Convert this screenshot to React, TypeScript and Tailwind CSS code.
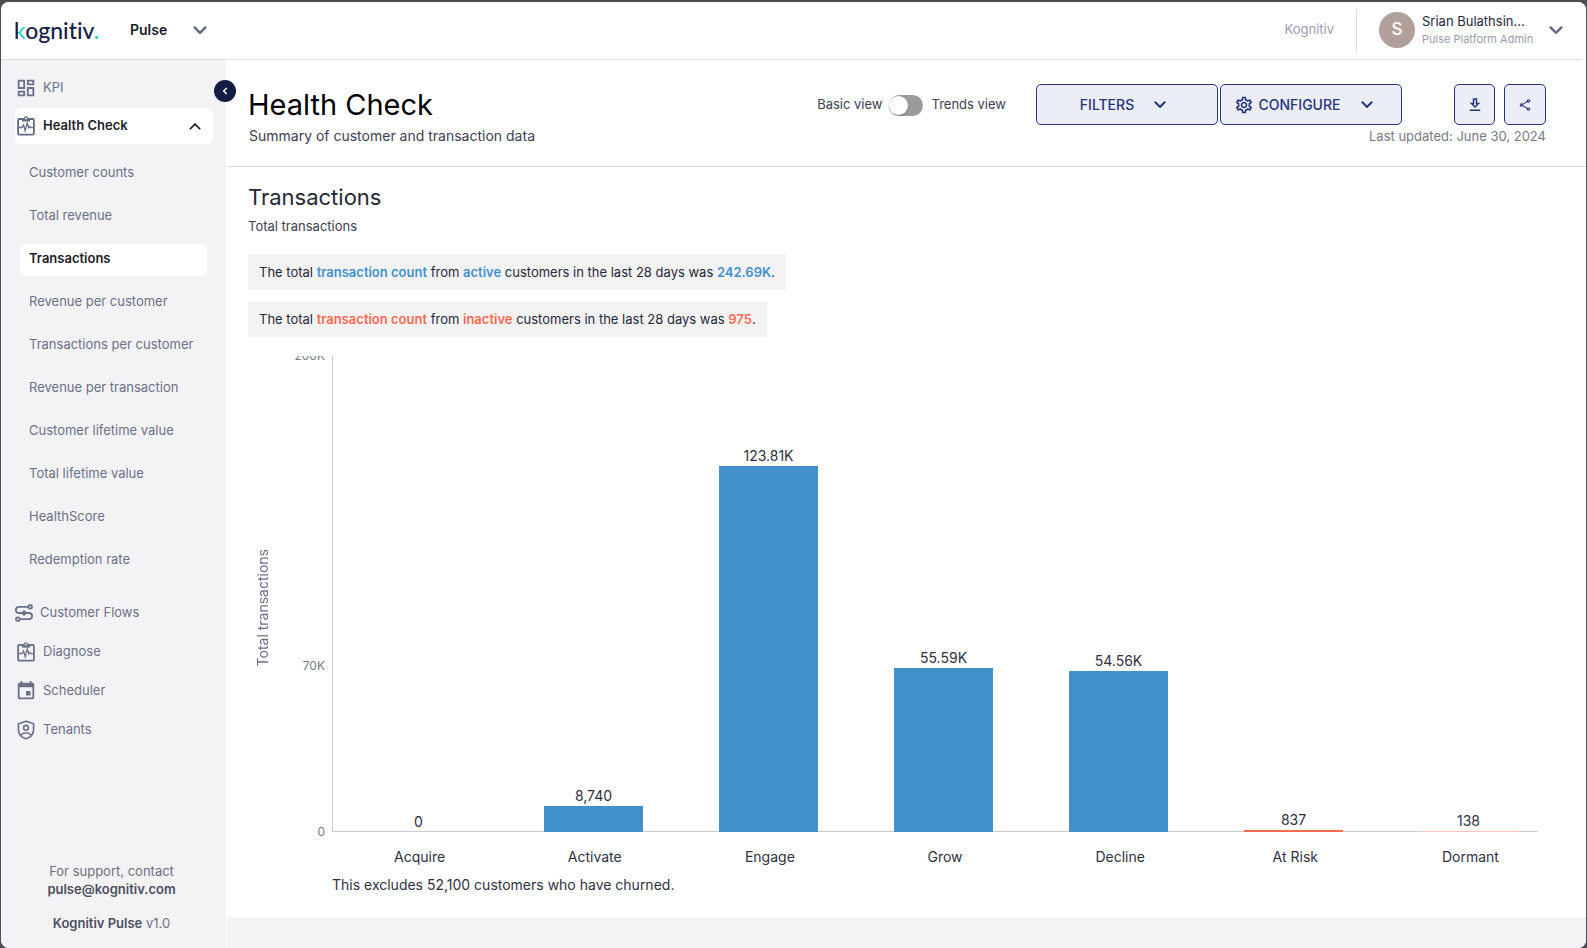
import type { ReactNode } from "react";
import { MdEvent, MdOutlineDashboard, MdOutlineSettings, MdOutlineShare } from "react-icons/md";

function Chevron({ className, up = false, weight = 2 }: { className: string; up?: boolean; weight?: number }) {
  return (
    <svg viewBox="0 0 14 8" fill="none" stroke="currentColor" strokeWidth={weight} className={className} aria-hidden="true">
      <path d={up ? "M1 7.2 7 1.2l6 6" : "M1 .8 7 6.8l6-6"} />
    </svg>
  );
}

function DownloadIcon() {
  return (
    <svg viewBox="0 0 24 24" fill="currentColor" className="size-[18px]" aria-hidden="true">
      <path d="M19 9h-4V3H9v6H5l7 7 7-7zm-8 2V5h2v6h1.17L12 13.17 9.83 11H11zm-6 7h14v2H5z" />
    </svg>
  );
}

function ClipboardPulse() {
  return (
    <svg viewBox="0 0 18 20" fill="none" stroke="currentColor" className="h-5 w-[18px]" aria-hidden="true">
      <rect x="1.1" y="3" width="15.8" height="15.6" rx="1.2" strokeWidth="1.8" />
      <path d="M5 2.600h8v3H5z" fill="currentColor" stroke="none" />
      <circle cx="9" cy="2.400" r="1.500" strokeWidth="1.200" fill="#f3f3f6" />
      <path d="M2 11.500h3l1.600-2.700 1.600 6 2-7.800 1.600 4.800 1-1.400 1.200 1.200h2" strokeWidth="1.300" />
    </svg>
  );
}

function FlowIcon() {
  return (
    <svg viewBox="0 0 18 18" fill="none" stroke="currentColor" strokeWidth="1.8" className="size-[18px]" aria-hidden="true">
      <circle cx="15.2" cy="2.8" r="1.8" />
      <circle cx="2.8" cy="15.2" r="1.8" />
      <path d="M13.4 2.8H4A3.1 3.1 0 0 0 4 9h10a3.1 3.1 0 0 1 0 6.2H4.6" />
      <path d="m9 6 3.4 3L9 12 5.6 9z" fill="currentColor" stroke="none" />
    </svg>
  );
}

function ShieldUser() {
  return (
    <svg viewBox="0 0 18 20" fill="none" stroke="currentColor" strokeWidth="1.6" className="h-5 w-[18px]" aria-hidden="true">
      <path d="M9 1.2 1.4 3.8v5.6c0 4.4 3.2 8 7.6 9.4 4.4-1.4 7.6-5 7.6-9.4V3.8z" />
      <circle cx="9" cy="7.8" r="2.4" />
      <path d="M3.8 15.2c1.2-1.6 3-2.4 5.2-2.4s4 .8 5.2 2.4" />
    </svg>
  );
}

const subItems = [
  "Customer counts",
  "Total revenue",
  "Transactions",
  "Revenue per customer",
  "Transactions per customer",
  "Revenue per transaction",
  "Customer lifetime value",
  "Total lifetime value",
  "HealthScore",
  "Redemption rate",
];

const SCALE_MAX = 161000;

const bars = [
  { name: "Acquire", value: 0, label: "0", tone: "bg-[#4391cb]" },
  { name: "Activate", value: 8740, label: "8,740", tone: "bg-[#4391cb]" },
  { name: "Engage", value: 123810, label: "123.81K", tone: "bg-[#4391cb]" },
  { name: "Grow", value: 55590, label: "55.59K", tone: "bg-[#4391cb]" },
  { name: "Decline", value: 54560, label: "54.56K", tone: "bg-[#4391cb]" },
  { name: "At Risk", value: 837, label: "837", tone: "bg-[#fd6a4e]" },
  { name: "Dormant", value: 138, label: "138", tone: "bg-[#f6c5bf]" },
];

function NavLink({ icon, children }: { icon: ReactNode; children: ReactNode }) {
  return (
    <a href="#" className="flex h-[39px] items-center gap-2 pl-4 text-[#6b7088]">
      {icon}
      <span>{children}</span>
    </a>
  );
}

function Header() {
  return (
    <header className="flex h-[57px] items-center bg-white pr-[23px] pb-0.5 pl-[13px]">
      <a
        href="#"
        aria-label="kognitiv"
        className="w-[116px] font-['Lato',sans-serif] text-[23px] leading-8 font-medium text-[#161d45] [font-variant-ligatures:none]"
      >
        <span className="bg-[linear-gradient(90deg,#161d45_0_4px,#22d3c5_4px)] bg-clip-text text-transparent">k</span>
        ognitiv<span className="text-[#22d3c5]">.</span>
      </a>
      <button type="button" className="flex items-center gap-[26px] text-[14px] font-semibold text-[#1b1d29]">
        Pulse
        <Chevron className="h-2 w-[14px] text-[#646a82]" weight={2.4} />
      </button>
      <span className="ml-auto text-[13px] text-[#9a9cae]">Kognitiv</span>
      <div className="ml-[22px] h-[42px] w-px bg-[#dcdce2]" />
      <button type="button" className="ml-[22px] flex items-center text-left">
        <span className="grid size-9 place-items-center rounded-full bg-[#b19f9b] text-[17px] font-medium text-white">S</span>
        <span className="ml-[7px] w-[113px]">
          <span className="block text-[13px] leading-[18px] text-[#262837]">Srian Bulathsin...</span>
          <span className="block text-[11px] leading-[18px] whitespace-nowrap text-[#9a9cae]">Pulse Platform Admin</span>
        </span>
        <Chevron className="ml-[14px] h-2 w-[14px] text-[#646a82]" weight={2.4} />
      </button>
    </header>
  );
}

function Sidebar() {
  return (
    <aside className="flex w-[225px] shrink-0 flex-col bg-[#f3f3f6] text-[13px]">
      <nav className="flex flex-col pt-2">
        <div className="relative mb-px">
          <NavLink icon={<MdOutlineDashboard className="-mx-0.5 size-[22px]" />}>KPI</NavLink>
          <button
            type="button"
            aria-label="Collapse menu"
            className="absolute top-3 -right-[10px] grid size-[22px] place-items-center rounded-full bg-[#161d45] text-white"
          >
            <svg viewBox="0 0 6 8" fill="none" stroke="currentColor" strokeWidth="1.4" className="h-2 w-1.5" aria-hidden="true">
              <path d="M4.8 1 1.6 4l3.2 3" />
            </svg>
          </button>
        </div>
        <a href="#" className="mr-[13px] ml-[14px] flex h-9 items-center rounded-md bg-white pl-0.5 text-[#646a82]">
          <ClipboardPulse />
          <span className="ml-2 font-semibold text-[#1b1d29]">Health Check</span>
          <Chevron className="mr-3 ml-auto h-[7px] w-3 text-[#1b1d29]" up />
        </a>
        <ul className="mt-[14px] mr-[19px] ml-[19px] flex flex-col gap-[11px]">
          {subItems.map((item) => (
            <li key={item}>
              <a
                href="#"
                className={
                  item === "Transactions"
                    ? "block h-8 rounded-md bg-white pl-[9px] leading-[29px] font-semibold text-[#1b1d29]"
                    : "block h-8 pl-[9px] leading-[29px] text-[#6b7088]"
                }
              >
                {item}
              </a>
            </li>
          ))}
        </ul>
        <div className="mt-4">
          <a href="#" className="flex h-[39px] items-center gap-[7px] pl-[14px] text-[#6b7088]">
            <FlowIcon />
            <span>Customer Flows</span>
          </a>
          <NavLink icon={<ClipboardPulse />}>Diagnose</NavLink>
          <NavLink icon={<MdEvent className="-mx-0.5 size-[22px]" />}>Scheduler</NavLink>
          <NavLink icon={<ShieldUser />}>Tenants</NavLink>
        </div>
      </nav>
      <footer className="mt-auto pr-1 pb-4 text-center leading-[18px] text-[#6d707e]">
        <p>For support, contact</p>
        <p>
          <a href="#" className="font-semibold text-[#4c4f60]">pulse@kognitiv.com</a>
        </p>
        <p className="mt-4">
          <span className="font-semibold text-[#4c4f60]">Kognitiv Pulse</span> v1.0
        </p>
      </footer>
    </aside>
  );
}

function PageHeader() {
  const outlined = "flex h-[41px] items-center rounded-[5px] border border-[#26347c] bg-[#ebedf7] text-[#26347c]";
  return (
    <div className="flex justify-between border-b border-[#dedee2] pt-6 pr-10 pb-[19px] pl-[21px]">
      <div>
        <h1 className="text-[29px] leading-[42px] text-black">Health Check</h1>
        <p className="pl-px text-[14px] leading-5 text-[#3e4051]">Summary of customer and transaction data</p>
      </div>
      <div>
        <div className="flex items-center">
          <label className="mr-[30px] flex items-center pt-px text-[13px] text-[#3e4051]">
            <span>Basic view</span>
            <input type="checkbox" role="switch" className="sr-only" />
            <span className="mr-2 ml-[7px] flex h-[21px] w-[34px] items-center rounded-full bg-[#9b9b9b]">
              <span className="size-[19px] rounded-full bg-white shadow-[0_1px_2px_rgba(0,0,0,0.25)]" />
            </span>
            <span>Trends view</span>
          </label>
          <button type="button" className={`${outlined} w-[182px] justify-center gap-5 pr-2 text-[14px] font-medium`}>
            FILTERS
            <Chevron className="h-[7px] w-3" weight={2.4} />
          </button>
          <button type="button" className={`${outlined} ml-0.5 w-[182px] justify-center pr-4 text-[14px] font-medium`}>
            <MdOutlineSettings className="mr-[5px] size-5" />
            CONFIGURE
            <Chevron className="ml-5 h-[7px] w-3" weight={2.4} />
          </button>
          <button type="button" aria-label="Download" className={`${outlined} ml-[52px] w-[41px] justify-center`}>
            <DownloadIcon />
          </button>
          <button type="button" aria-label="Share" className={`${outlined} ml-[9px] w-[42px] justify-center`}>
            <MdOutlineShare className="size-[14px]" />
          </button>
        </div>
        <p className="text-right text-[13px] leading-[22px] text-[#777986]">Last updated: June 30, 2024</p>
      </div>
    </div>
  );
}

function Chart() {
  return (
    <figure className="mt-[19px] flex">
      <div className="flex w-[30px] items-center justify-center pb-9">
        <span className="rotate-180 text-[14px] leading-5 text-[#6b7088] [writing-mode:vertical-rl]">Total transactions</span>
      </div>
      <div className="min-w-0 flex-1">
        <div className="flex">
          <div className="relative h-[476px] w-[54px] shrink-0 pr-[7px] text-right text-[12px] leading-4 text-[#777986]">
            <div className="h-2 overflow-hidden">
              <span className="-mt-2 block">200K</span>
            </div>
            <span className="absolute top-[302px] right-[7px]">70K</span>
            <span className="absolute right-[7px] -bottom-2">0</span>
          </div>
          <div className="-mr-[18px] grid h-[476px] flex-1 grid-cols-1 grid-rows-1 border-l border-[#c9cad3]">
            <div className="col-start-1 row-start-1 mr-[18px] border-b border-[#c9cad3]" />
            <div className="col-start-1 row-start-1 -ml-0.5 grid grid-cols-7">
              {bars.map((bar) => (
                <div key={bar.name} className="flex flex-col items-center justify-end">
                  <span className="text-[14px] leading-5 text-[#2f3142]">{bar.label}</span>
                  <div
                    className={`w-[99px] ${bar.tone}`}
                    style={{ height: bar.value ? `max(1px, ${(bar.value / SCALE_MAX) * 100}%)` : 0 }}
                  />
                </div>
              ))}
            </div>
          </div>
        </div>
        <div className="-mr-5 ml-[54px] grid grid-cols-7 pt-[15px] text-center text-[14px] leading-5 text-[#2f3142]">
          {bars.map((bar) => (
            <span key={bar.name}>{bar.name}</span>
          ))}
        </div>
        <figcaption className="mt-2 ml-[54px] text-[14px] leading-5 text-[#2f3142]">
          This excludes 52,100 customers who have churned.
        </figcaption>
      </div>
    </figure>
  );
}

export default function App() {
  return (
    <div className="flex min-h-screen bg-[#4d4d52] px-px pt-0.5 font-['Inter',sans-serif]">
      <div className="flex flex-1 flex-col overflow-hidden rounded-lg bg-white">
        <Header />
        <div className="mr-1 h-px bg-[#dedee2]" />
        <div className="flex flex-1">
          <Sidebar />
          <main className="ml-px flex min-w-0 flex-1 flex-col">
            <PageHeader />
            <section className="pr-12 pb-[22px] pl-[21px]">
              <h2 className="pt-[14px] text-[22px] leading-8 text-[#262837]">Transactions</h2>
              <p className="mt-[3px] text-[13px] leading-5 text-[#3e4051]">Total transactions</p>
              <div className="mt-[18px] flex flex-col items-start gap-[11px] text-[13px] leading-9 text-[#262837]">
                <p className="bg-[#f3f3f6] px-[11px]">
                  The total <b className="font-semibold text-[#4391cb]">transaction count</b> from{" "}
                  <b className="font-semibold text-[#4391cb]">active</b> customers in the last 28 days was{" "}
                  <b className="font-semibold text-[#4391cb]">242.69K</b>.
                </p>
                <p className="bg-[#f3f3f6] px-[11px]">
                  The total <b className="font-semibold text-[#fd6a4e]">transaction count</b> from{" "}
                  <b className="font-semibold text-[#fd6a4e]">inactive</b> customers in the last 28 days was{" "}
                  <b className="font-semibold text-[#fd6a4e]">975</b>.
                </p>
              </div>
              <Chart />
            </section>
            <div className="flex-1 bg-[#f3f3f6]" />
          </main>
        </div>
      </div>
    </div>
  );
}
